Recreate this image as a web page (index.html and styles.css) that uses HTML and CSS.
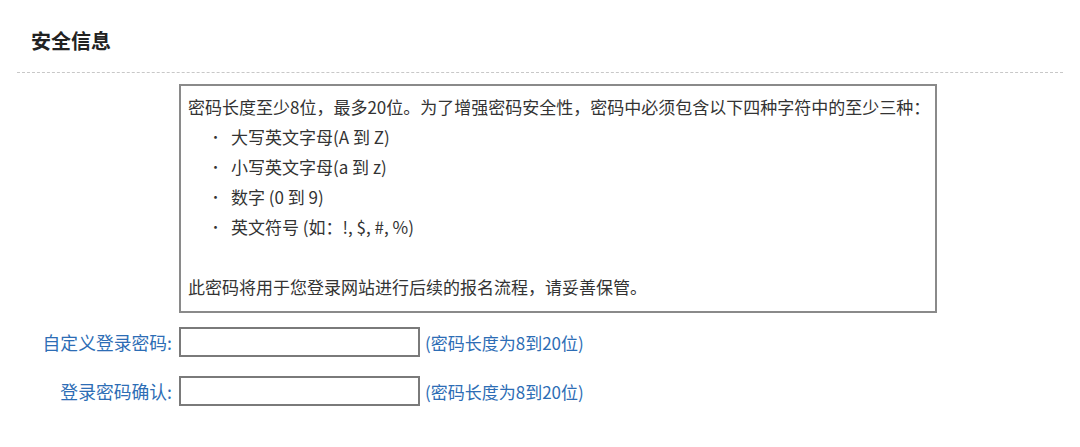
FILE: index.html
```html
<!DOCTYPE html>
<html lang="zh-CN">
<head>
    <meta charset="UTF-8">
    <meta name="viewport" content="width=device-width, initial-scale=1.0">
    <title>安全信息</title>
    <link rel="stylesheet" href="styles.css">
</head>
<body>
    <div class="section">
        <h2 class="section-title">安全信息</h2>
        <div class="notice">
            <p>密码长度至少8位，最多20位。为了增强密码安全性，密码中必须包含以下四种字符中的至少三种：</p>
            <ul>
                <li>大写英文字母(A 到 Z)</li>
                <li>小写英文字母(a 到 z)</li>
                <li>数字 (0 到 9)</li>
                <li>英文符号 (如：!, $, #, %)</li>
            </ul>
            <p class="blank">&nbsp;</p>
            <p>此密码将用于您登录网站进行后续的报名流程，请妥善保管。</p>
        </div>

        <div class="form-row">
            <label for="pwd">自定义登录密码:</label>
            <input type="password" id="pwd">
            <span class="hint">(密码长度为8到20位)</span>
        </div>
        <div class="form-row">
            <label for="pwd2">登录密码确认:</label>
            <input type="password" id="pwd2">
            <span class="hint">(密码长度为8到20位)</span>
        </div>
    </div>
</body>
</html>
```

FILE: styles.css
```css
body { margin: 0; background: #fff; color: #333; font-family: "Microsoft YaHei", "Noto Sans CJK SC", "Liberation Sans", sans-serif; font-size: 17px; }
.section { padding: 28px 0 0; }
.section-title { margin: 0 17px; padding: 0 14px 18px; font-size: 20px; font-weight: bold; line-height: 26px; color: #222; border-bottom: 1px dashed #c8c8c8; }
.notice { width: 740px; margin: 11px 0 0 179px; padding: 6px 7px 9px; border: 2px solid #8a8a8a; }
.notice p { margin: 0; line-height: 30px; white-space: nowrap; }
.notice ul { margin: 0; padding-left: 43px; line-height: 30px; }
.notice li { list-style: none; position: relative; }
.notice li::before { content: "•"; position: absolute; left: -22px; font-size: 13px; }
.form-row { display: flex; align-items: center; margin-top: 14px; }
.form-row + .form-row { margin-top: 19px; }
.form-row label { width: 172px; text-align: right; color: #2d6db5; font-size: 17.8px; }
.form-row input { width: 237px; height: 26px; margin: 0 0 0 7px; padding: 0; border: 2px solid #7a7a7a; }
.hint { margin-left: 5px; color: #2d6db5; }
```
